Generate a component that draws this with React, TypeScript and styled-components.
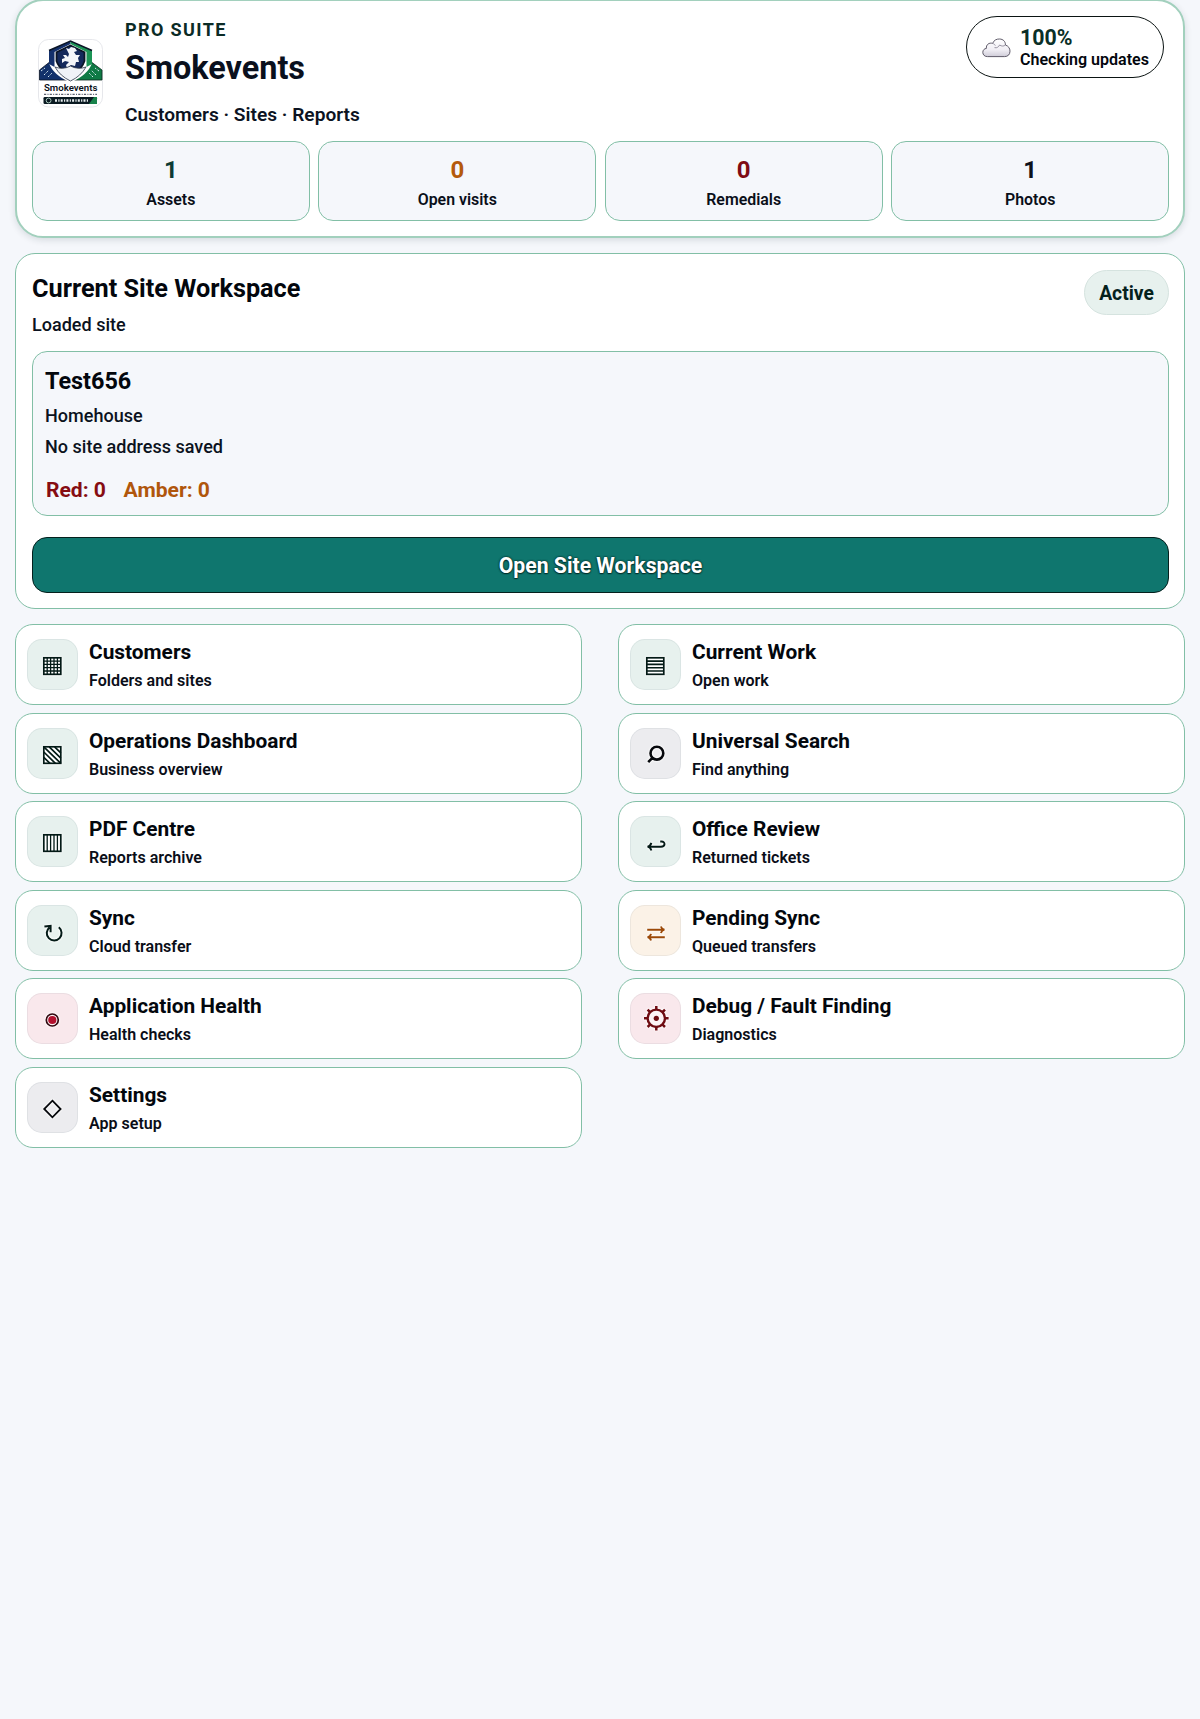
import React from 'react';
import styled, { createGlobalStyle } from 'styled-components';

const GlobalStyle = createGlobalStyle`
  * {
    box-sizing: border-box;
  }
  body {
    margin: 0;
    background: #f5f7fb;
    color: #03070d;
    font-family: Roboto, "Liberation Sans", sans-serif;
  }
  h1, h2, h3, p {
    margin: 0;
  }
`;

type Tone = 'green' | 'grey' | 'amber' | 'red';

const toneBackground: Record<Tone, string> = {
  green: '#e7f1ee',
  grey: '#ececef',
  amber: '#fbf2e7',
  red: '#f9e8ec',
};

const toneInk: Record<Tone, string> = {
  green: '#031a16',
  grey: '#06080c',
  amber: '#9c4a08',
  red: '#6f0c12',
};

const Page = styled.main`
  min-height: 1719px;
  padding: 0 15px;
  margin-top: -1px;
  overflow: hidden;
`;

/* ---- header ---- */

const Header = styled.header`
  height: 239px;
  padding: 15px 14px 0 15px;
  background: #fff;
  border: 2px solid #a2d0bd;
  border-radius: 28px;
  box-shadow: 0 2px 7px rgba(20, 40, 50, 0.14);
`;

const Brand = styled.div`
  display: flex;
  align-items: center;
`;

const LogoSlot = styled.div`
  flex: none;
  width: 93px;
  padding: 4px 0 0 6px;
  line-height: 0;
`;

const BrandText = styled.div`
  flex: 1;
  padding-top: 3px;
`;

const Eyebrow = styled.p`
  font-size: 18px;
  font-weight: 700;
  line-height: 22px;
  letter-spacing: 1.4px;
  color: #0b2b26;
`;

const BrandName = styled.h1`
  margin-top: 8px;
  font-size: 32.4px;
  font-weight: 700;
  line-height: 38px;
  color: #0a101d;
`;

const Tagline = styled.p`
  margin-top: 15.5px;
  font-size: 19.15px;
  font-weight: 600;
  line-height: 24px;
  color: #0c1322;
`;

const CloudPill = styled.div`
  display: flex;
  align-self: flex-start;
  align-items: center;
  gap: 9.5px;
  width: 198px;
  height: 62px;
  margin-right: 5px;
  padding: 2px 0 0 14.5px;
  border: 1.5px solid #0b1413;
  border-radius: 31px;
`;

const CloudPercent = styled.p`
  font-size: 21.3px;
  font-weight: 700;
  line-height: 23px;
  color: #0a2f27;
`;

const CloudStatus = styled.p`
  font-size: 16.05px;
  font-weight: 600;
  line-height: 21px;
  white-space: nowrap;
`;

const Stats = styled.div`
  display: grid;
  grid-template-columns: repeat(4, 277.7px);
  justify-content: space-between;
  margin-top: 14.5px;
`;

const Stat = styled.div`
  height: 80.3px;
  padding-top: 13.6px;
  text-align: center;
  background: #f5f7fb;
  border: 1px solid #82bfa6;
  border-radius: 15px;
`;

const StatValue = styled.p<{ $color: string }>`
  font-size: 24px;
  font-weight: 700;
  line-height: 28px;
  color: ${({ $color }) => $color};
`;

const StatLabel = styled.p`
  margin-top: 6px;
  font-size: 15.9px;
  font-weight: 600;
  line-height: 20px;
  color: #0a0f19;
`;

/* ---- current site ---- */

const Panel = styled.section`
  height: 356px;
  margin-top: 15px;
  padding: 16px 15px 16px 16px;
  background: #fff;
  border: 1px solid #82bfa6;
  border-radius: 20px;
`;

const PanelHead = styled.div`
  display: flex;
  justify-content: space-between;
  align-items: flex-start;
`;

const PanelTitle = styled.h2`
  margin-top: 4px;
  font-size: 25.25px;
  font-weight: 700;
  line-height: 30px;
`;

const BodyText = styled.p<{ $top: number }>`
  margin-top: ${({ $top }) => $top}px;
  font-size: 18.05px;
  font-weight: 550;
  line-height: 22px;
  color: #0b1220;
`;

const ActivePill = styled.span`
  display: flex;
  align-items: center;
  justify-content: center;
  width: 85px;
  height: 45px;
  padding-top: 1.5px;
  background: #e7f1ee;
  border: 1px solid #d5e3df;
  border-radius: 23px;
  font-size: 19.3px;
  font-weight: 700;
  color: #04211c;
`;

const SiteBox = styled.div`
  height: 165px;
  margin-top: 15px;
  padding: 15.2px 12px 0;
  background: #f5f7fb;
  border: 1px solid #82bfa6;
  border-radius: 15px;
`;

const SiteName = styled.h3`
  font-size: 23.4px;
  font-weight: 700;
  line-height: 28px;
`;

const Counts = styled.div`
  display: flex;
  gap: 17.6px;
  margin-top: 18.8px;
  padding-left: 0.9px;
`;

const Count = styled.span<{ $color: string }>`
  font-size: 21.1px;
  font-weight: 700;
  line-height: 26px;
  color: ${({ $color }) => $color};
`;

const OpenButton = styled.button`
  display: block;
  width: 100%;
  height: 56px;
  margin-top: 21px;
  padding: 2px 0 0;
  background: #0f766e;
  border: 1.5px solid #05201d;
  border-radius: 15px;
  font-family: inherit;
  font-size: 21.2px;
  font-weight: 700;
  color: #fff;
  text-shadow: 0 0 2px #05302c, 0 0 2px #05302c, 0 1px 1px #05302c;
`;

/* ---- menu tiles ---- */

const Tiles = styled.nav`
  display: grid;
  grid-template-columns: 1fr 1fr;
  column-gap: 36px;
  row-gap: 7.6px;
  margin-top: 15px;
`;

const TileCard = styled.div`
  display: flex;
  align-items: center;
  gap: 11px;
  height: 81px;
  padding: 0 11px;
  background: #fff;
  border: 1px solid #82bfa6;
  border-radius: 18px;
`;

const TileIcon = styled.div<{ $tone: Tone }>`
  flex: none;
  width: 51px;
  height: 51px;
  background: ${({ $tone }) => toneBackground[$tone]};
  border-radius: 15px;
  box-shadow: inset 0 0 0 1px rgba(20, 50, 60, 0.06);
  color: ${({ $tone }) => toneInk[$tone]};

  svg {
    display: block;
    filter: drop-shadow(0 0 1px #fff) drop-shadow(0 0 0.5px #fff);
  }
`;

const TileText = styled.div`
  padding-top: 2px;
`;

const TileTitle = styled.h3`
  font-size: 20.85px;
  font-weight: 700;
  line-height: 24px;
`;

const TileHint = styled.p`
  margin-top: 7.1px;
  font-size: 16.05px;
  font-weight: 600;
  line-height: 20px;
  color: #0a0e18;
`;

const glyphs: Record<string, React.ReactNode> = {
  grid: (
    <>
      <rect x="16.8" y="18.8" width="17" height="16.5" fill="#fff" />
      <path d="M20.2 18.8v16.5M23.6 18.8v16.5M27 18.8v16.5M30.4 18.8v16.5M16.8 22.1h17M16.8 25.4h17M16.8 28.7h17M16.8 32h17" strokeWidth="1.3" />
    </>
  ),
  rows: (
    <>
      <rect x="16.8" y="18.8" width="17" height="16.5" fill="#fff" />
      <path d="M16.8 22.1h17M16.8 25.4h17M16.8 28.7h17M16.8 32h17" strokeWidth="1.6" />
    </>
  ),
  hatch: (
    <>
      <rect x="16.8" y="18.8" width="17" height="16.5" fill="#fff" />
      <path d="M16.8 18.8l17 16.5M22.2 18.8l11.6 11.3M27.6 18.8l6.2 6M16.8 24l11.6 11.3M16.8 29.3l6.2 6" strokeWidth="1.7" />
    </>
  ),
  columns: (
    <>
      <rect x="16.8" y="18.8" width="17" height="16.5" fill="#fff" />
      <path d="M20.2 18.8v16.5M23.6 18.8v16.5M27 18.8v16.5M30.4 18.8v16.5" strokeWidth="1.3" />
    </>
  ),
  search: <path d="M33.3 25.2a6.4 6.4 0 1 1-12.8 0a6.4 6.4 0 1 1 12.8 0zM22.4 29.8L18.2 34.2" strokeWidth="2.6" />,
  back: <path d="M17.6 30.7H31c4.6 0 4.6-5.2.6-5.2h-1.4M21.4 26.9Q20.4 30 17.6 30.7Q20.4 31.4 21.4 34.5" strokeWidth="1.9" />,
  reload: <path d="M31.8 22.3A7.4 7.4 0 1 1 22.4 22.4M17.4 21.6L23.6 20.9V27.2" strokeWidth="2" />,
  swap: <path d="M17.2 24.7H34M30.9 21.4Q31.6 24 34.4 24.7Q31.6 25.4 30.9 28M34.8 32.2H18M21 28.9Q20.4 31.5 17.6 32.2Q20.4 32.9 21 35.5" strokeWidth="1.9" />,
  record: (
    <>
      <circle cx="25.3" cy="27" r="6" fill="#fdf1f4" stroke="#30080f" strokeWidth="1.7" />
      <circle cx="25.3" cy="27" r="4.1" fill="#b3122f" stroke="none" />
    </>
  ),
  gear: (
    <>
      <circle cx="26.3" cy="25.3" r="8.7" fill="#fdf3f5" strokeWidth="2.4" />
      <circle cx="26.3" cy="25.3" r="2.6" fill="currentColor" stroke="none" />
      <path d="M26.3 13v3.5M26.3 34.1v3.5M14 25.3h3.5M35.1 25.3h3.5M17.6 16.6l2.4 2.4M32.6 31.6l2.4 2.4M17.6 34l2.4-2.4M32.6 19l2.4-2.4" strokeWidth="2.5" />
    </>
  ),
  diamond: <path d="M25.4 18.7L33.6 27L25.4 35.3L17.2 27z" strokeWidth="1.8" />,
};

const Glyph = ({ name }: { name: string }) => (
  <svg width="51" height="51" viewBox="0 0 51 51" fill="none" stroke="currentColor" strokeWidth="1.7">
    {glyphs[name]}
  </svg>
);

const Logo = () => (
  <svg width="65" height="69" viewBox="0 0 65 69">
    <rect x=".5" y=".5" width="64" height="67.5" rx="10" fill="#fff" stroke="#dfe1e6" strokeWidth=".8" />
    <path d="M1.5 41V31L11 23.5L20 28L30 41z" fill="#12316b" stroke="#0b1526" strokeWidth=".8" />
    <path d="M64 41V31L54 23.5L45 28L35 41z" fill="#0f7a45" stroke="#0b2a20" strokeWidth=".8" />
    <path d="M32.5 2L54 11.5V24Q50 36 32.5 43.5Q15 36 11 24V11.5z" fill="#fff" />
    <path d="M11 11.5L32.5 2V5L16.5 13V28L11 25z" fill="#14306b" />
    <path d="M54 11.5L32.5 2V5L48.5 13V28L54 25z" fill="#1b9455" />
    <path d="M11 11.5L32.5 2L54 11.5" fill="none" stroke="#0b1526" strokeWidth="1.6" />
    <path d="M32.5 6.5L46.5 13.3V22Q44 29 39 32H26Q20.5 28 18.5 22V13.3z" fill="#14295c" stroke="#0b1526" strokeWidth="1.8" />
    <path d="M28 9l3 1 2-2 4 1 2 3-3 1 2 3 4 0-2 3 1 4-3 0-1 4-4-1-4 3-1-3 3-3-4-1-3 2 0-4 3-1-2-3 3 0 2 2 1-3z" fill="#f3f5fa" />
    <path d="M17 28Q25 31 32.5 27Q40 31 48 28Q43 37 32.5 42Q22 37 17 28z" fill="#f0f3f8" stroke="#2b3547" strokeWidth=".8" />
    <path d="M3 32l4-3M6 36l5-5M10 38l4-4M61 32l-4-3M58 36l-5-5M55 38l-4-4" stroke="#d4e6ee" strokeWidth="1" strokeDasharray="2 1.4" />
    <text x="32.7" y="51.5" textAnchor="middle" textLength="53.5" lengthAdjust="spacingAndGlyphs" fontSize="9.6" fontWeight="600" fill="#0a0f18">Smokevents</text>
    <path d="M6 55.3h53" stroke="#5b6270" strokeWidth="1.3" strokeDasharray="2.2 1.3 1 1.2" />
    <rect x="5.5" y="58" width="53.5" height="7" rx="1.2" fill="#0a1a22" />
    <path d="M51 65l5-7h3v7z" fill="#18824b" />
    <circle cx="10.6" cy="61.5" r="2.4" fill="none" stroke="#b9d8cb" strokeWidth=".9" />
    <path d="M17 61.5h33" stroke="#e8eef0" strokeWidth="2.4" strokeDasharray="2 1.3 1.2 1.2" />
  </svg>
);

const Cloud = () => (
  <svg width="29" height="20" viewBox="0 0 29 20">
    <defs>
      <linearGradient id="cloud" x1="0" y1="0" x2="0" y2="1">
        <stop offset="0" stopColor="#fff" />
        <stop offset=".6" stopColor="#f1eff5" />
        <stop offset="1" stopColor="#cfccd8" />
      </linearGradient>
    </defs>
    <path
      d="M5.5 18.6C2.6 18.6.8 16.8.8 14.4C.8 12 2.4 10.6 4.4 10.4C3.8 6.6 7.4 4.3 10.6 5.4C12 2 14.6.9 17.6 1C21.2 1.1 23.6 3.6 23.4 7C26.4 8 28 10.3 28 13.2C28 16.6 25.8 18.6 22.6 18.6z"
      fill="url(#cloud)"
      stroke="#4f4b5a"
      strokeWidth=".9"
    />
    <path d="M10.6 5.4C12 5.8 12.8 6.5 13.3 7.6M12.5 9.6C15 10.4 16.8 8.6 17.6 7C19.6 8.4 22 8.4 23.4 7" fill="none" stroke="#8d8998" strokeWidth=".9" />
  </svg>
);

const stats = [
  { value: 1, label: 'Assets', color: '#0d3b33' },
  { value: 0, label: 'Open visits', color: '#b45a0c' },
  { value: 0, label: 'Remedials', color: '#7f0b14' },
  { value: 1, label: 'Photos', color: '#0c111b' },
];

const tiles: { title: string; hint: string; icon: string; tone: Tone }[] = [
  { title: 'Customers', hint: 'Folders and sites', icon: 'grid', tone: 'green' },
  { title: 'Current Work', hint: 'Open work', icon: 'rows', tone: 'green' },
  { title: 'Operations Dashboard', hint: 'Business overview', icon: 'hatch', tone: 'green' },
  { title: 'Universal Search', hint: 'Find anything', icon: 'search', tone: 'grey' },
  { title: 'PDF Centre', hint: 'Reports archive', icon: 'columns', tone: 'green' },
  { title: 'Office Review', hint: 'Returned tickets', icon: 'back', tone: 'green' },
  { title: 'Sync', hint: 'Cloud transfer', icon: 'reload', tone: 'green' },
  { title: 'Pending Sync', hint: 'Queued transfers', icon: 'swap', tone: 'amber' },
  { title: 'Application Health', hint: 'Health checks', icon: 'record', tone: 'red' },
  { title: 'Debug / Fault Finding', hint: 'Diagnostics', icon: 'gear', tone: 'red' },
  { title: 'Settings', hint: 'App setup', icon: 'diamond', tone: 'grey' },
];

const App = () => {
  return (
    <>
      <GlobalStyle />
      <Page>
        <Header>
          <Brand>
            <LogoSlot>
              <Logo />
            </LogoSlot>
            <BrandText>
              <Eyebrow>PRO SUITE</Eyebrow>
              <BrandName>Smokevents</BrandName>
              <Tagline>Customers · Sites · Reports</Tagline>
            </BrandText>
            <CloudPill>
              <Cloud />
              <div>
                <CloudPercent>100%</CloudPercent>
                <CloudStatus>Checking updates</CloudStatus>
              </div>
            </CloudPill>
          </Brand>
          <Stats>
            {stats.map((s) => (
              <Stat key={s.label}>
                <StatValue $color={s.color}>{s.value}</StatValue>
                <StatLabel>{s.label}</StatLabel>
              </Stat>
            ))}
          </Stats>
        </Header>

        <Panel>
          <PanelHead>
            <div>
              <PanelTitle>Current Site Workspace</PanelTitle>
              <BodyText $top={9.8}>Loaded site</BodyText>
            </div>
            <ActivePill>Active</ActivePill>
          </PanelHead>
          <SiteBox>
            <SiteName>Test656</SiteName>
            <BodyText $top={10.1}>Homehouse</BodyText>
            <BodyText $top={9.3}>No site address saved</BodyText>
            <Counts>
              <Count $color="#860d12">Red: 0</Count>
              <Count $color="#b0560c">Amber: 0</Count>
            </Counts>
          </SiteBox>
          <OpenButton type="button">Open Site Workspace</OpenButton>
        </Panel>

        <Tiles>
          {tiles.map((t) => (
            <TileCard key={t.title}>
              <TileIcon $tone={t.tone}>
                <Glyph name={t.icon} />
              </TileIcon>
              <TileText>
                <TileTitle>{t.title}</TileTitle>
                <TileHint>{t.hint}</TileHint>
              </TileText>
            </TileCard>
          ))}
        </Tiles>
      </Page>
    </>
  );
};

export default App;
